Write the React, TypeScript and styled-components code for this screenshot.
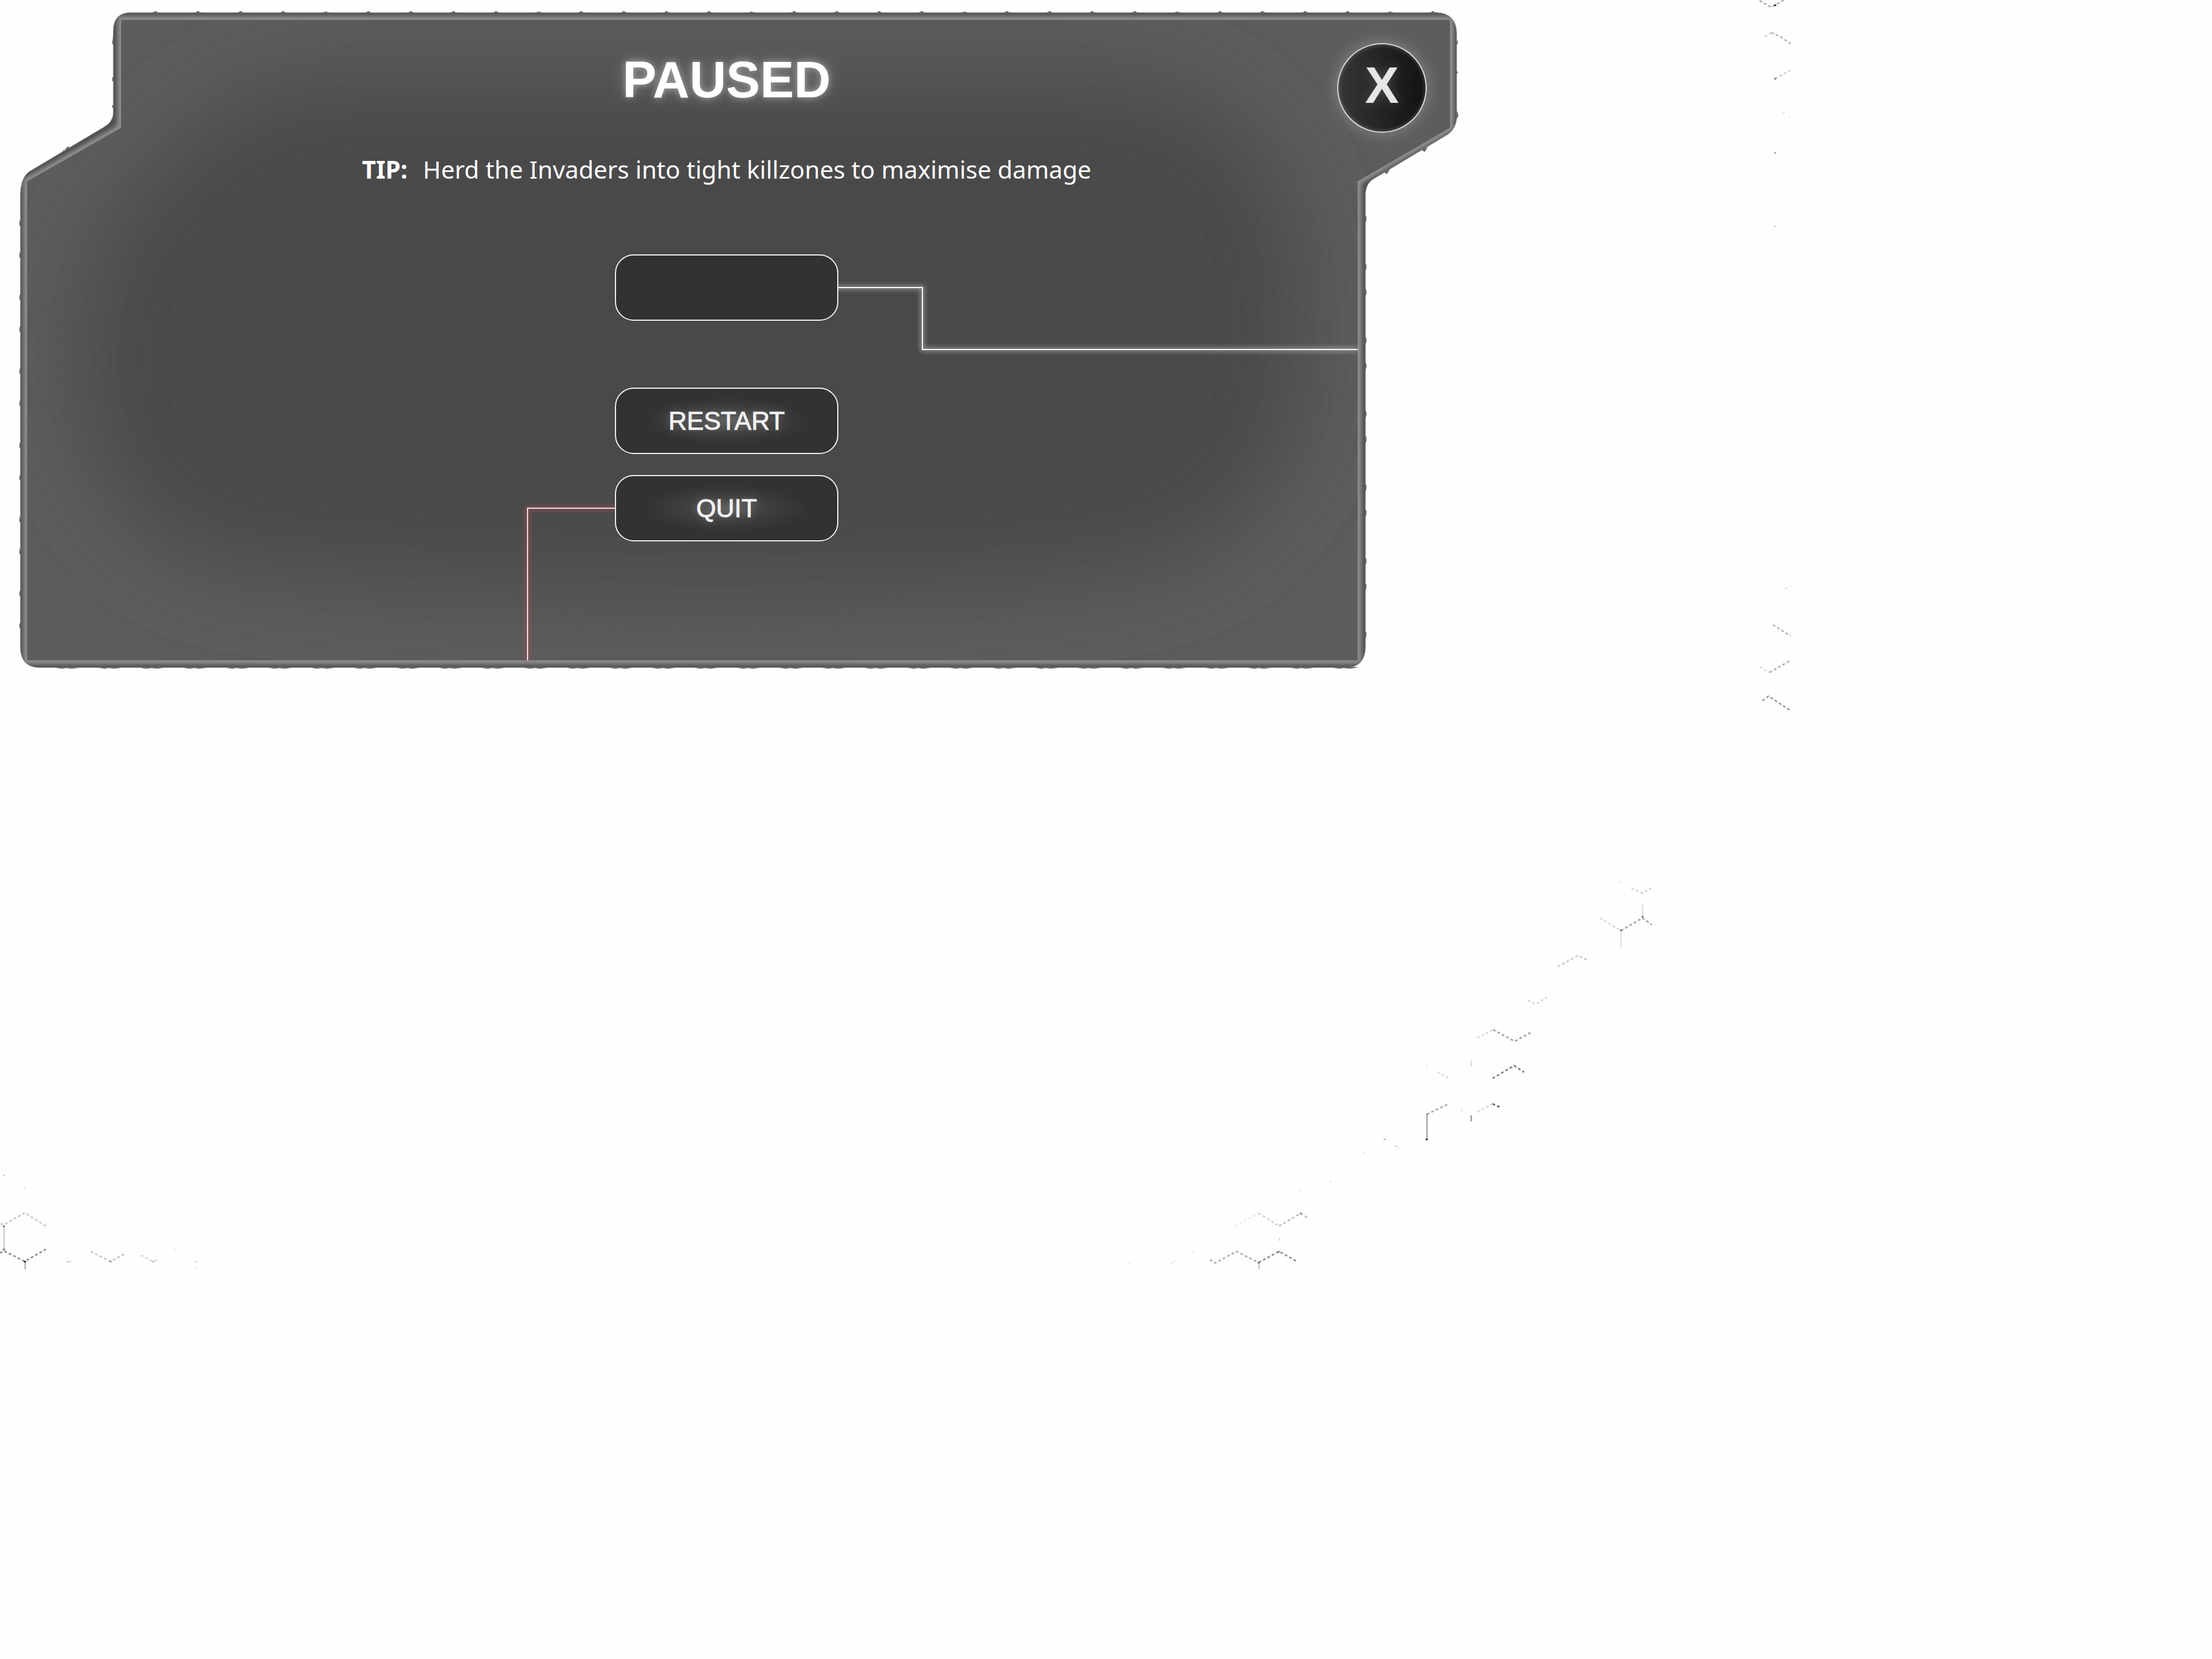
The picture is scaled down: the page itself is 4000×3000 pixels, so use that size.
import React from "react";
import styled, { createGlobalStyle } from "styled-components";

const GlobalStyle = createGlobalStyle`
  * { box-sizing: border-box; }
  body { margin: 0; background: #fefefe; }
`;

const sans = `"Liberation Sans", Arial, Helvetica, sans-serif`;

const Page = styled.main`
  position: relative;
  min-height: 100vh;
  overflow: hidden;
  font-family: ${sans};
`;

const Backdrop = styled.svg`
  position: absolute;
  top: 0;
  left: 0;
  width: 100%;
`;

const Panel = styled.section`
  position: relative;
  width: 67%;
  max-width: 2660px;
  padding: 92px 32px 241px 0;
  display: flex;
  flex-direction: column;
  align-items: center;
`;

const Frame = styled.svg`
  position: absolute;
  inset: 0;
  width: 100%;
  height: 100%;
`;

const Title = styled.h1`
  position: relative;
  margin: 0 0 82px;
  color: #fff;
  font-size: 92px;
  line-height: 104px;
  font-weight: 700;
  text-shadow: 0 0 12px rgba(255, 255, 255, 0.4), 0 0 28px rgba(255, 255, 255, 0.3);
`;

const Tip = styled.p`
  position: relative;
  display: flex;
  gap: 28px;
  margin: 0 0 126px;
  color: #fff;
  font-family: "Noto Sans", "Open Sans", sans-serif;
  font-size: 44px;
  line-height: 56px;
`;

const Actions = styled.div`
  position: relative;
  display: flex;
  flex-direction: column;
  gap: 38px;
`;

const MenuButton = styled.button<{ $spaced?: boolean; $glow?: boolean }>`
  width: 404px;
  height: 120px;
  margin: 0 0 ${(p) => (p.$spaced ? 83 : 0)}px;
  padding: 0;
  border: 2px solid #f6f6f6;
  border-radius: 34px;
  background: ${(p) =>
    p.$glow
      ? "radial-gradient(ellipse 150px 44px at 50% 50%, #565656, #3f3f3f 50%, #323232)"
      : "#323232"};
  color: #f1f1f1;
  font-family: ${sans};
  font-size: 46px;
  line-height: 52px;
  -webkit-text-stroke: 1px #f1f1f1;
  text-shadow: 0 0 16px rgba(255, 255, 255, 0.3);
  cursor: pointer;
`;

const CloseButton = styled.button`
  position: absolute;
  top: 78px;
  right: 80px;
  width: 162px;
  height: 162px;
  padding: 0 0 10px;
  border: 2px solid #dedede;
  border-radius: 50%;
  background: linear-gradient(90deg, #363636, #121212);
  box-shadow: 0 0 28px rgba(255, 255, 255, 0.28), inset 0 0 8px rgba(255, 255, 255, 0.3);
  color: #e6e6e6;
  font-family: ${sans};
  font-size: 92px;
  line-height: 104px;
  font-weight: 700;
  text-shadow: 0 0 20px rgba(255, 255, 255, 0.2);
  cursor: pointer;
`;

/* Chains of hexagon edges left visible at the rim of the faded grid. */
const chains: [string, number][] = [
  ["3182,1 3203,13 3226,0", 0.3],
  ["3191,66 3203,59", 0.15],
  ["3203,59 3219,66 3238,79", 0.28],
  ["3210,142 3238,127", 0.18],
  ["3228,1065 3237,1060", 0.1],
  ["3206,1130 3238,1150", 0.28],
  ["3182,1206 3200,1216", 0.12],
  ["3200,1216 3238,1194", 0.3],
  ["3187,1267 3198,1259 3238,1285", 0.38],
  ["2950,1606 2970,1615 2986,1606", 0.16],
  ["2893,1660 2931,1683", 0.14],
  ["2931,1683 2970,1660 2987,1672", 0.35],
  ["2817,1748 2853,1728 2871,1736", 0.2],
  ["2763,1809 2777,1816 2797,1804", 0.15],
  ["2671,1877 2700,1862", 0.15],
  ["2700,1862 2739,1883 2770,1866", 0.34],
  ["2599,1938 2620,1950", 0.13],
  ["2699,1950 2738,1927 2756,1939", 0.48],
  ["2580,2015 2620,1996", 0.32],
  ["2641,2007 2650,2011", 0.1],
  ["2671,2011 2699,1996", 0.14],
  ["2699,1996 2714,2003", 0.6],
  ["2523,2072 2532,2076", 0.15],
  ["2234,2217 2276,2194", 0.08],
  ["2276,2194 2313,2217", 0.16],
  ["2313,2217 2352,2194 2364,2202", 0.24],
  ["2188,2278 2197,2284 2236,2263 2276,2283", 0.3],
  ["2276,2283 2313,2263 2345,2281", 0.42],
  ["1,2213 7,2215 45,2193 83,2217", 0.2],
  ["0,2266 7,2262 45,2281 83,2259", 0.42],
  ["164,2263 200,2281 228,2266", 0.22],
  ["255,2270 276,2281 286,2278", 0.15],
];

const stems: [number, number, number, number][] = [
  [2970, 1636, 1660, 0.1],
  [2931, 1683, 1714, 0.1],
  [2660, 1918, 1928, 0.12],
  [2580, 2014, 2061, 0.3],
  [2660, 2017, 2028, 0.34],
  [2313, 2238, 2244, 0.1],
  [2276, 2283, 2295, 0.18],
  [7, 2217, 2258, 0.16],
  [45, 2281, 2295, 0.26],
];

const dots: [number, number, number][] = [
  [3210, 9, 0.7], [3210, 142, 0.4], [3210, 276, 0.28], [3210, 409, 0.14],
  [3225, 203, 0.08], [3236, 211, 0.08], [2931, 1595, 0.08], [2970, 1657, 0.35],
  [2931, 1682, 0.3], [2580, 1927, 0.08], [2580, 2060, 0.65], [2504, 2060, 0.22],
  [2466, 2083, 0.08], [2406, 2136, 0.08], [2352, 2152, 0.08], [2158, 2263, 0.08],
  [2123, 2281, 0.08], [2119, 2285, 0.08], [2042, 2285, 0.08], [2352, 2194, 0.3],
  [2313, 2263, 0.35], [2276, 2283, 0.3], [7, 2125, 0.14], [45, 2148, 0.08],
  [7, 2217, 0.4], [7, 2259, 0.5], [45, 2281, 0.7], [122, 2281, 0.14],
  [126, 2281, 0.14], [200, 2281, 0.25], [277, 2281, 0.22], [316, 2259, 0.08],
  [354, 2281, 0.14], [354, 2293, 0.08],
];

function HexGrid() {
  return (
    <Backdrop viewBox="0 0 4000 3000" aria-hidden="true">
      <g fill="none" stroke="#000" strokeWidth="3" strokeDasharray="5 4">
        {chains.map(([points, o]) => (
          <polyline key={points} points={points} opacity={o} />
        ))}
      </g>
      {stems.map(([x, y1, y2, o]) => (
        <rect key={`${x}-${y1}`} x={x - 1} y={y1} width="3" height={y2 - y1} opacity={o} />
      ))}
      {dots.map(([x, y, o]) => (
        <rect key={`${x}-${y}`} x={x - 2} y={y - 1} width="4" height="3" opacity={o} />
      ))}
    </Backdrop>
  );
}

const outer =
  "M233 23H2600Q2633 25 2634 60V210Q2634 232 2618 243L2486 322Q2470 330 2469 350V1172Q2467 1206 2436 1207H70Q38 1206 37 1172V350Q38 322 52 311L188 230Q205 220 205 204V56Q205 25 233 23Z";
const inner = "M219 36H2622V231L2455 328V1194H49V328L219 231Z";

/* Roughness along the rim, spaced like the hexagons that meet it. */
const topNubs = Array.from({ length: 31 }, (_, i) => 281 + i * 77);
const leftNubs = Array.from({ length: 6 }, (_, i) => [1132 - i * 134, 1074 - i * 134]).flat();
const rightNubs = Array.from({ length: 6 }, (_, i) => [1147 - i * 133, 1060 - i * 133]).flat();
const scallops = Array.from({ length: 31 }, (_, i) => 98 + i * 77);

function PanelFrame() {
  return (
    <Frame viewBox="0 0 2660 1220" preserveAspectRatio="none" aria-hidden="true">
      <defs>
        <clipPath id="outerClip"><path d={outer} /></clipPath>
        <clipPath id="innerClip"><path d={inner} /></clipPath>
        <filter id="soft" filterUnits="userSpaceOnUse" x="-300" y="-300" width="3200" height="1900">
          <feGaussianBlur stdDeviation="90" />
        </filter>
        <filter id="bevel" filterUnits="userSpaceOnUse" x="0" y="0" width="2660" height="1220">
          <feGaussianBlur stdDeviation="4" />
        </filter>
        <filter id="lineGlow" filterUnits="userSpaceOnUse" x="0" y="0" width="2660" height="1220">
          <feGaussianBlur stdDeviation="4" />
        </filter>
      </defs>
      <g fill="#686868">
        {topNubs.map((x, i) => (
          <path key={x} d={`M${x - 14} 24L${x - 3} 22L${x - 1} ${i % 5 < 4 ? 20 : 21}H${x + 1}L${x + 3} 22L${x + 14} 24Z`} />
        ))}
        {leftNubs.map((y) => (
          <path key={y} d={`M39 ${y - 12}L35 ${y - 3}V${y + 3}L39 ${y + 8}Z`} />
        ))}
        {rightNubs.map((y) => (
          <path key={y} d={`M2468 ${y - 8}L2471 ${y - 3}V${y + 3}L2468 ${y + 12}Z`} />
        ))}
        {scallops.map((x) => (
          <path key={x} d={`M${x} 1206Q${x + 10} 1211 ${x + 22} 1208Q${x + 36} 1211 ${x + 48} 1206Z`} />
        ))}
        <path d="M206 55L203 76V80H206ZM206 140H203V147H206ZM206 190H203V195H206ZM104 282L116 270L126 271L124 264ZM156 252L168 243L178 240ZM2633 73L2636 74V80H2633ZM2633 127L2636 130V133H2633ZM2633 198L2637 206V210L2633 218ZM2570 270L2576 275L2582 266ZM2501 310L2508 315L2514 305Z" />
      </g>
      <path d={outer} fill="#4e4e4e" stroke="#777" strokeWidth="1" />
      <g clipPath="url(#outerClip)">
        <path d={inner} fill="none" stroke="#949494" strokeWidth="13" filter="url(#bevel)" />
      </g>
      <path d={inner} fill="#5d5d5d" />
      <g clipPath="url(#innerClip)">
        <path
          d="M640 140H1960Q2220 150 2310 320Q2370 460 2360 660Q2350 900 2140 1010Q1900 1070 1300 1070Q640 1070 340 1010Q140 900 140 640Q150 400 330 260Q440 140 640 140Z"
          fill="#484848"
          filter="url(#soft)"
        />
      </g>
      <path d="M1510 520H1668V632H2455" fill="none" stroke="#fff" strokeWidth="7" opacity=".4" filter="url(#lineGlow)" />
      <path d="M1510 520H1668V632H2455" fill="none" stroke="#fff" strokeWidth="2" />
      <path d="M1114 919H954V1194" fill="none" stroke="#c8505a" strokeWidth="8" opacity=".45" filter="url(#lineGlow)" />
      <path d="M1114 919H954V1194" fill="none" stroke="#f3e6e6" strokeWidth="2" />
    </Frame>
  );
}

export default function App() {
  return (
    <Page>
      <GlobalStyle />
      <HexGrid />
      <Panel aria-labelledby="pause-title">
        <PanelFrame />
        <Title id="pause-title">PAUSED</Title>
        <Tip>
          <strong>TIP:</strong>
          <span>Herd the Invaders into tight killzones to maximise damage</span>
        </Tip>
        <Actions>
          <MenuButton type="button" $spaced aria-label="Resume" />
          <MenuButton type="button" $glow>RESTART</MenuButton>
          <MenuButton type="button" $glow>QUIT</MenuButton>
        </Actions>
        <CloseButton type="button" aria-label="Close">X</CloseButton>
      </Panel>
    </Page>
  );
}
